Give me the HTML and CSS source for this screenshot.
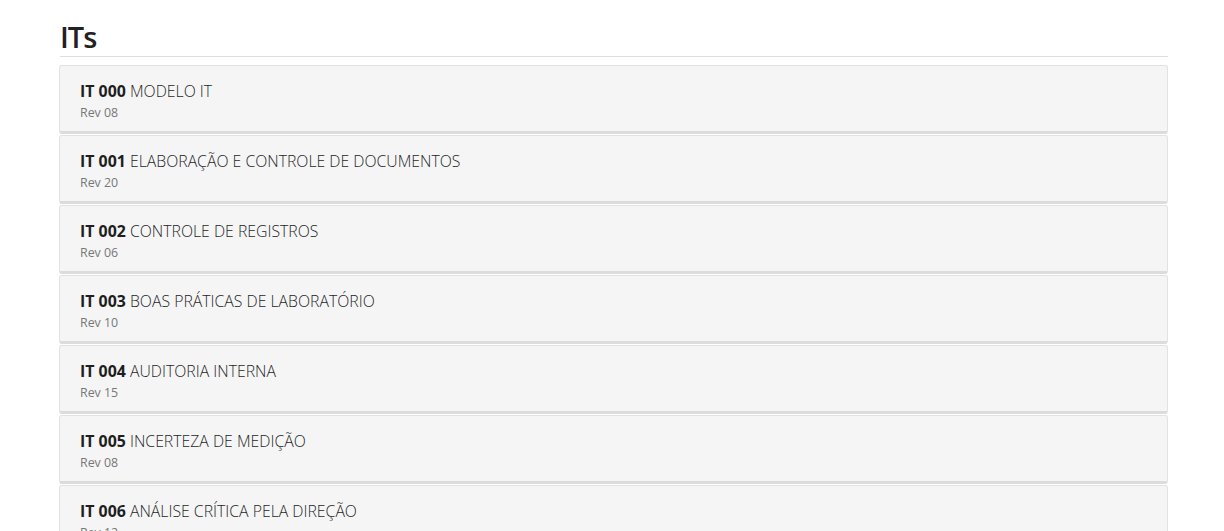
FILE: index.html
```html
<!DOCTYPE html>
<html lang="pt">
<head>
<meta charset="utf-8">
<title>ITs</title>
<link rel="stylesheet" href="styles.css">
</head>
<body>
<div class="container">
  <h1 class="page-title">ITs</h1>
  <div class="list">
    <div class="item"><div class="title"><b>IT 000</b> MODELO IT</div><div class="rev">Rev 08</div></div>
    <div class="item"><div class="title"><b>IT 001</b> ELABORAÇÃO E CONTROLE DE DOCUMENTOS</div><div class="rev">Rev 20</div></div>
    <div class="item"><div class="title"><b>IT 002</b> CONTROLE DE REGISTROS</div><div class="rev">Rev 06</div></div>
    <div class="item"><div class="title"><b>IT 003</b> BOAS PRÁTICAS DE LABORATÓRIO</div><div class="rev">Rev 10</div></div>
    <div class="item"><div class="title"><b>IT 004</b> AUDITORIA INTERNA</div><div class="rev">Rev 15</div></div>
    <div class="item"><div class="title"><b>IT 005</b> INCERTEZA DE MEDIÇÃO</div><div class="rev">Rev 08</div></div>
    <div class="item"><div class="title"><b>IT 006</b> ANÁLISE CRÍTICA PELA DIREÇÃO</div><div class="rev">Rev 12</div></div>
    <div class="item"><div class="title"><b>IT 007</b> TREINAMENTO</div><div class="rev">Rev 09</div></div>
  </div>
</div>
</body>
</html>
```

FILE: styles.css
```css
html, body {
  margin: 0;
  padding: 0;
  background: #fff;
  font-family: "Open Sans", "Noto Sans", sans-serif;
  color: #222;
}
.container {
  width: 1109px;
  margin: 0 0 0 59px;
  padding-top: 18px;
}
.page-title {
  margin: 0 0 8px 1px;
  font-size: 29px;
  font-weight: 600;
  line-height: 38px;
  color: #222;
  border-bottom: 1px solid #dedede;
  letter-spacing: -1px;
}
.list {
  display: flex;
  flex-direction: column;
  gap: 1px;
}
.item {
  background: #f5f5f5;
  border: 1px solid #e2e2e2;
  border-bottom: 3px solid #dcdcdc;
  border-radius: 3px;
  padding: 14px 20px 11px 20px;
  height: 40px;
}
.title {
  font-size: 15.8px;
  font-weight: 340;
  line-height: 22px;
  color: #1e1e1e;
}
.title b {
  font-weight: 700;
  font-size: 15.9px;
}
.rev {
  font-size: 12.4px;
  line-height: 22px;
  color: #777;
}
```
